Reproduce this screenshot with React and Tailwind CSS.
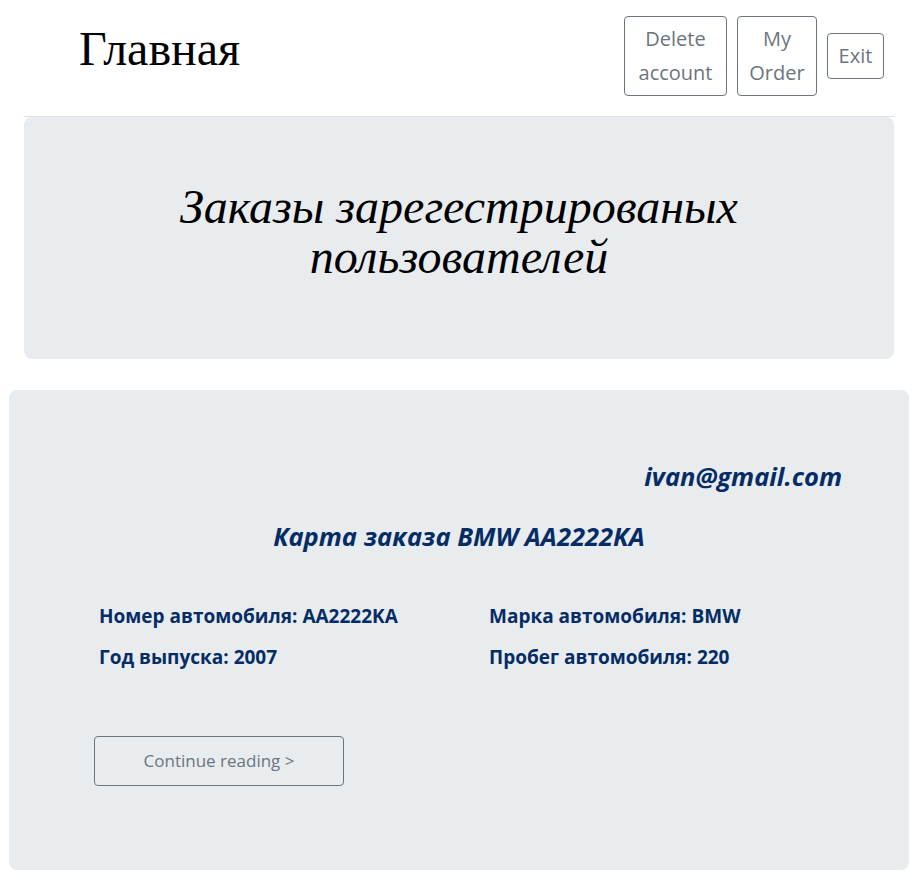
import React from 'react';

const fields = [
  ['Номер автомобиля: AA2222KA', 'Марка автомобиля: BMW'],
  ['Год выпуска: 2007', 'Пробег автомобиля: 220'],
];

const sans = { fontFamily: '"Open Sans", "Noto Sans", sans-serif' };

export default function App() {
  return (
    <div className="min-h-[884px] bg-white font-['Open_Sans',_'Noto_Sans',_sans-serif]">
      {/* Header */}
      <header className="mx-6 flex h-[117px] items-center justify-between border-b border-[#dee2e6]">
        <h1 className="pl-[55px] pb-[18px] font-['Liberation_Serif',_serif] text-[48px] leading-none text-black">
          Главная
        </h1>
        <div className="flex items-center gap-[10px] pr-[10px] pb-[4px]">
          <button className="w-[103px] rounded-[4px] border border-[#6c757d] py-[5px] text-[20px] leading-[34px] text-[#6c757d]">
            Delete
            <br />
            account
          </button>
          <button className="w-[80px] rounded-[4px] border border-[#6c757d] py-[5px] text-[20px] leading-[34px] text-[#6c757d]">
            My
            <br />
            Order
          </button>
          <button className="w-[57px] rounded-[4px] border border-[#6c757d] py-[5px] text-[20px] leading-[34px] text-[#6c757d]">
            Exit
          </button>
        </div>
      </header>

      {/* Jumbotron */}
      <section className="mx-6 flex h-[242px] items-center justify-center rounded-[8px] bg-[#e9ecef] pb-[12px]">
        <h2 className="text-center font-['Liberation_Serif',_serif] text-[48px] italic leading-[50px] text-black">
          Заказы зарегестрированых
          <br />
          пользователей
        </h2>
      </section>

      {/* Order card */}
      <section className="mx-[9px] mt-[31px] h-[480px] rounded-[8px] bg-[#e9ecef] px-[85px] pt-[70px]" style={sans}>
        <div className="text-right">
          <span className="mr-[-18px] text-[25.5px] font-bold italic leading-[33px] text-[#052c65]">ivan@gmail.com</span>
        </div>
        <h3 className="mt-[27px] text-center text-[25.5px] font-bold italic leading-[33px] text-[#052c65]">
          Карта заказа BMW AA2222KA
        </h3>
        <div className="mt-[48px] grid grid-cols-[390px_1fr] gap-y-[10px] pl-[5px] text-[19px] font-bold leading-[31px] text-[#052c65]">
          {fields.map(([a, b]) => (
            <React.Fragment key={a}>
              <div>{a}</div>
              <div>{b}</div>
            </React.Fragment>
          ))}
        </div>
        <button className="mt-[63px] h-[50px] w-[250px] rounded-[4px] border border-[#6c757d] text-[17px] text-[#6c757d]">
          Continue reading &gt;
        </button>
      </section>
    </div>
  );
}
